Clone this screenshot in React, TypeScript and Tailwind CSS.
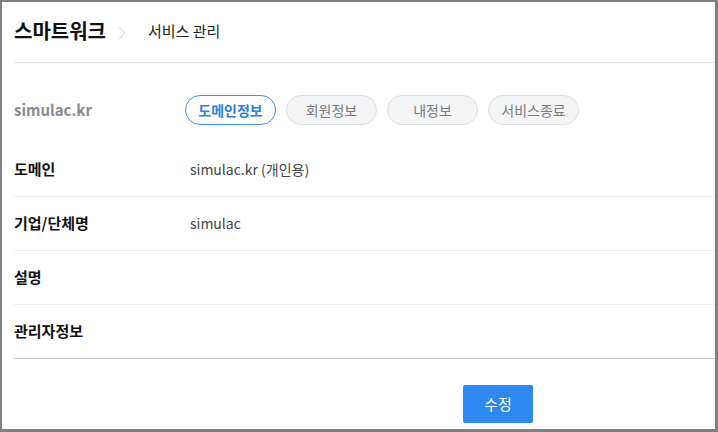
import React from "react";

const TABS = ["도메인정보", "회원정보", "내정보", "서비스종료"];

const ROWS = [
  { label: "도메인", value: "simulac.kr (개인용)" },
  { label: "기업/단체명", value: "simulac" },
  { label: "설명", value: "" },
  { label: "관리자정보", value: "" },
];

function App() {
  return (
    <div
      className="w-[718px] h-[432px] overflow-hidden border-t-2 border-l-2 border-r-[3px] border-b-[3px] border-[#808080] bg-white"
      style={{ fontFamily: '"Noto Sans CJK KR", "Noto Sans", sans-serif' }}
    >
      {/* header */}
      <div className="ml-3 h-[61px] flex items-center border-b border-[#e6e6e6]">
        <h1 className="text-[20px] font-bold text-[#111] -mt-[2px]">스마트워크</h1>
        <svg width="8" height="14" viewBox="0 0 8 14" className="ml-[12px] mt-[2px]">
          <path d="M1 1l6 6-6 6" fill="none" stroke="#d6d6d6" strokeWidth="1" />
        </svg>
        <span className="ml-[22px] text-[15px] text-[#222] -mt-[1px]">서비스 관리</span>
      </div>

      {/* domain + tabs */}
      <div className="ml-3 h-[80px] pt-[32px] flex items-start">
        <div className="w-[171px] h-[30px] flex items-center text-[15px] font-bold text-[#8a8a8a]">simulac.kr</div>
        <div className="flex gap-[10px]">
          {TABS.map((tab, i) => (
            <button
              key={tab}
              className={
                i === 0
                  ? "w-[91px] h-[30px] rounded-full border border-[#3d8fe8] bg-white text-[14px] font-bold text-[#2a7fe0]"
                  : "w-[91px] h-[30px] rounded-full border border-[#dddddd] bg-[#f3f4f6] text-[14px] text-[#7a7a7a]"
              }
            >
              {tab}
            </button>
          ))}
        </div>
      </div>

      {/* info rows */}
      <div className="ml-3">
        {ROWS.map((row, i) => (
          <div
            key={row.label}
            className={
              i === ROWS.length - 1
                ? "h-[54px] flex items-center border-b border-[#c8c8c8]"
                : "h-[54px] flex items-center border-b border-[#efefef]"
            }
          >
            <div className="w-[176px] text-[15px] font-bold text-[#111]">{row.label}</div>
            <div className="text-[14px] text-[#444]">{row.value}</div>
          </div>
        ))}
      </div>

      {/* footer */}
      <div className="pt-[26px] pl-[461px]">
        <button className="w-[70px] h-[38px] rounded-[2px] bg-[#2d89ef] text-white text-[15px]">수정</button>
      </div>
    </div>
  );
}

export default App;
